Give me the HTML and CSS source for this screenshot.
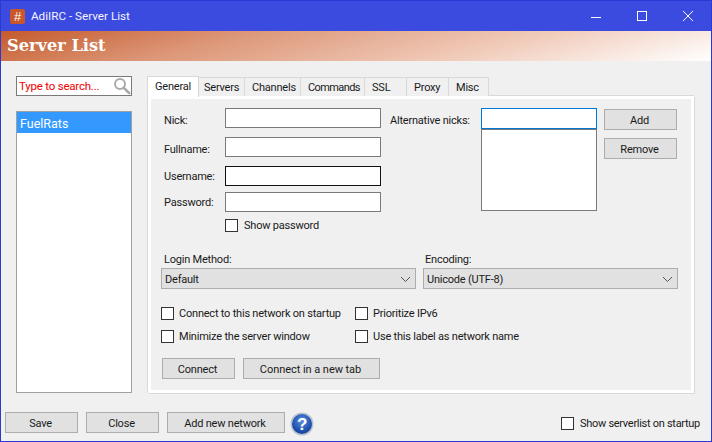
FILE: index.html
```html
<!DOCTYPE html>
<html lang="en">
<head>
<meta charset="utf-8">
<title>AdiIRC - Server List</title>
<link rel="stylesheet" href="styles.css">
</head>
<body>
<div class="window">
  <header class="titlebar">
    <span class="app-icon">#</span>
    <span class="title-text">AdiIRC - Server List</span>
    <div class="controls">
      <svg class="ctl" width="46" height="20" viewBox="0 0 46 20"><path d="M18 11.5h10" stroke="#fff" fill="none"/></svg>
      <svg class="ctl" width="46" height="20" viewBox="0 0 46 20"><rect x="18.5" y="5.5" width="9" height="9" stroke="#fff" fill="none"/></svg>
      <svg class="ctl" width="46" height="20" viewBox="0 0 46 20"><path d="M18 5l10 10M28 5L18 15" stroke="#fff" fill="none"/></svg>
    </div>
  </header>
  <div class="banner">Server List</div>
  <div class="main">
    <aside class="sidebar">
      <div class="search">
        <span class="search-text">Type to search...</span>
        <svg class="search-icon" width="18" height="18" viewBox="0 0 18 18"><circle cx="7" cy="7" r="5" fill="none" stroke="#aaa" stroke-width="2"/><path d="M10.8 10.8l5.4 5.4" stroke="#a8a8a8" stroke-width="2.6" stroke-linecap="round"/></svg>
      </div>
      <div class="network-list"><div class="network-item">FuelRats</div></div>
    </aside>
    <section class="tabs">
      <nav class="tabstrip">
        <span class="tab tab-active w-general">General</span>
        <span class="tab w-servers">Servers</span>
        <span class="tab w-channels">Channels</span>
        <span class="tab w-commands">Commands</span>
        <span class="tab w-ssl">SSL</span>
        <span class="tab w-proxy">Proxy</span>
        <span class="tab w-misc">Misc</span>
      </nav>
      <div class="panel">
        <div class="top">
          <div class="fields">
            <label class="field"><span class="field-label label-low">Nick:</span><span class="input"></span></label>
            <label class="field"><span class="field-label label-low">Fullname:</span><span class="input"></span></label>
            <label class="field field-tight"><span class="field-label">Username:</span><span class="input input-dark"></span></label>
            <label class="field field-last"><span class="field-label">Password:</span><span class="input"></span></label>
            <label class="check check-show"><span class="box"></span>Show password</label>
          </div>
          <div class="alt">
            <span class="alt-label">Alternative nicks:</span>
            <div class="alt-col">
              <span class="input input-focus"></span>
              <div class="alt-list"></div>
            </div>
            <div class="alt-buttons">
              <button class="btn btn-alt">Add</button>
              <button class="btn btn-alt">Remove</button>
            </div>
          </div>
        </div>
        <div class="selects">
          <div class="select-group">
            <span class="select-label">Login Method:</span>
            <div class="select"><span>Default</span><svg width="11" height="7" viewBox="0 0 11 7"><path d="M1 1l4.5 4.5L10 1" fill="none" stroke="#555"/></svg></div>
          </div>
          <div class="select-group">
            <span class="select-label select-label-near">Encoding:</span>
            <div class="select"><span>Unicode (UTF-8)</span><svg width="11" height="7" viewBox="0 0 11 7"><path d="M1 1l4.5 4.5L10 1" fill="none" stroke="#555"/></svg></div>
          </div>
        </div>
        <div class="options">
          <label class="check"><span class="box"></span>Connect to this network on startup</label>
          <label class="check"><span class="box"></span>Prioritize IPv6</label>
          <label class="check"><span class="box"></span>Minimize the server window</label>
          <label class="check"><span class="box"></span>Use this label as network name</label>
        </div>
        <div class="actions">
          <button class="btn btn-connect">Connect</button>
          <button class="btn btn-newtab">Connect in a new tab</button>
        </div>
      </div>
    </section>
  </div>
  <footer class="footer">
    <button class="btn btn-connect">Save</button>
    <button class="btn btn-connect">Close</button>
    <button class="btn btn-addnet">Add new network</button>
    <svg class="help" width="24" height="24" viewBox="0 0 24 24">
      <defs><radialGradient id="hg" cx="0.5" cy="0.35" r="0.7"><stop offset="0" stop-color="#5b8fe0"/><stop offset="0.7" stop-color="#1f4fae"/><stop offset="1" stop-color="#173c8a"/></radialGradient></defs>
      <circle cx="12" cy="12" r="11.5" fill="#b9c3cf"/>
      <circle cx="12" cy="12" r="10" fill="url(#hg)"/>
      <text x="12" y="18" text-anchor="middle" class="help-mark">?</text>
    </svg>
    <label class="check check-footer"><span class="box"></span>Show serverlist on startup</label>
  </footer>
</div>
</body>
</html>
```
FILE: styles.css
```css
* { box-sizing: border-box; }
html, body { margin: 0; padding: 0; }
body { width: 712px; height: 442px; overflow: hidden; font-family: "Roboto", "Liberation Sans", sans-serif; font-size: 11px; letter-spacing: -0.21px; color: #1a1a1a; }
button { font: inherit; letter-spacing: inherit; color: inherit; padding: 1px 2px 0 0; }

.window { width: 712px; height: 442px; display: flex; flex-direction: column; background: #f0f0f0; border: 1px solid #2a38d6; border-top: 0; }

.titlebar { height: 31px; flex: none; display: flex; align-items: center; background: #3c4bdf; border-top: 1px solid #2a38d6; color: #fff; padding-left: 9px; letter-spacing: 0; }
.app-icon { width: 15px; height: 15px; border-radius: 2px; background: #c9572a; color: #fff; font-family: "Liberation Sans", sans-serif; font-size: 13px; line-height: 15px; text-align: center; }
.title-text { margin-left: 6px; font-size: 11.7px; color: #f4f4ff; }
.controls { margin-left: auto; display: flex; }
.ctl { display: block; }

.banner { height: 30px; flex: none; background: linear-gradient(165deg, #c55a2b 0%, #dc9677 30%, #f1ccbb 68%, #ffffff 100%); font-family: "DejaVu Serif", serif; font-weight: 700; font-size: 16.2px; line-height: 29px; letter-spacing: 0; color: #fff; padding-left: 6px; }

.main { flex: none; display: flex; height: 350px; }
.sidebar { width: 116px; margin-left: 15px; padding-top: 15px; flex: none; }
.search { height: 20px; display: flex; align-items: center; justify-content: space-between; background: #fff; border: 1px solid #7a7a7a; padding: 0 0 0 2px; }
.search-text { color: #f00000; font-size: 11.5px; }
.network-list { margin-top: 15px; height: 282px; background: #fff; border: 1px solid #a0a0a0; }
.network-item { height: 21px; line-height: 23px; background: #3399ff; color: #fff; padding-left: 3px; font-size: 12.5px; letter-spacing: 0; }

.tabs { margin-left: 15px; padding-top: 15px; width: 547px; flex: none; }
.tabstrip { display: flex; height: 20px; align-items: flex-end; }
.tab { height: 19px; line-height: 20px; padding-left: 7px; background: #f0f0f0; border: 1px solid #d9d9d9; border-left: 0; border-bottom: 0; }
.tab-active { height: 21px; line-height: 19px; background: #fff; border-left: 1px solid #d9d9d9; margin-bottom: -1px; position: relative; z-index: 1; }
.w-general { width: 52px; }
.w-servers { width: 46px; padding-left: 5px; }
.w-channels { width: 56px; }
.w-commands { width: 64px; letter-spacing: -0.6px; }
.w-ssl { width: 42px; }
.w-proxy { width: 42px; }
.w-misc { width: 40px; }

.panel { margin-left: 1px; width: 546px; height: 297px; background: #f0f0f0; border: 3px solid #fff; box-shadow: 1px 1px 0 #d9d9d9, 0 -1px 0 #d9d9d9, -1px 0 0 #d9d9d9; padding: 9px 0 0 10px; }

.top { display: flex; height: 143px; }
.fields { width: 220px; flex: none; padding-left: 3px; }
.field { display: flex; align-items: center; height: 20px; margin-bottom: 9px; }
.field-tight { margin-bottom: 6px; }
.field-last { margin-bottom: 6px; }
.field-label { width: 61px; flex: none; }
.label-low { padding-top: 4px; }
.input { display: block; width: 156px; height: 20px; background: #fff; border: 1px solid #7a7a7a; }
.input-dark { border-color: #111; }
.input-focus { width: 116px; height: 21px; border-color: #0078d7; }

.alt { display: flex; margin-left: 9px; }
.alt-label { width: 91px; flex: none; padding-top: 6px; white-space: nowrap; }
.alt-col { width: 116px; flex: none; }
.alt-list { height: 82px; background: #fff; border: 1px solid #7a7a7a; }
.alt-buttons { margin-left: 7px; padding-top: 1px; display: flex; flex-direction: column; gap: 8px; }
.btn { display: block; height: 21px; background: #e1e1e1; border: 1px solid #adadad; text-align: center; }
.btn-alt { width: 73px; }

.check { display: flex; align-items: center; gap: 5px; height: 14px; white-space: nowrap; }
.box { display: block; width: 13px; height: 13px; flex: none; background: #fff; border: 1px solid #333; }
.check-show { margin: 0 0 0 61px; gap: 6px; }

.selects { display: flex; gap: 7px; }
.select-group { width: 255px; flex: none; }
.select-label { display: block; height: 17px; line-height: 17px; padding-left: 3px; }
.select-label-near { padding-left: 2px; }
.select { display: flex; align-items: center; justify-content: space-between; height: 21px; background: #e1e1e1; border: 1px solid #adadad; padding: 1px 4px 0 3px; }

.options { display: grid; grid-template-columns: 194px auto; row-gap: 9px; margin-top: 17px; }

.actions { display: flex; gap: 8px; margin-top: 15px; margin-left: 1px; }
.btn-connect { width: 73px; }
.btn-newtab { width: 137px; letter-spacing: -0.05px; }

.footer { flex: none; display: flex; align-items: flex-start; padding: 1px 0 0 4px; gap: 8px; }
.btn-addnet { width: 118px; }
.help { display: block; margin-left: -3px; }
.help-mark { font-family: "Liberation Sans", sans-serif; font-size: 17px; font-weight: 700; fill: #fff; }
.check-footer { margin-left: auto; margin-right: 11px; margin-top: 4px; gap: 6px; letter-spacing: -0.29px; }
```
